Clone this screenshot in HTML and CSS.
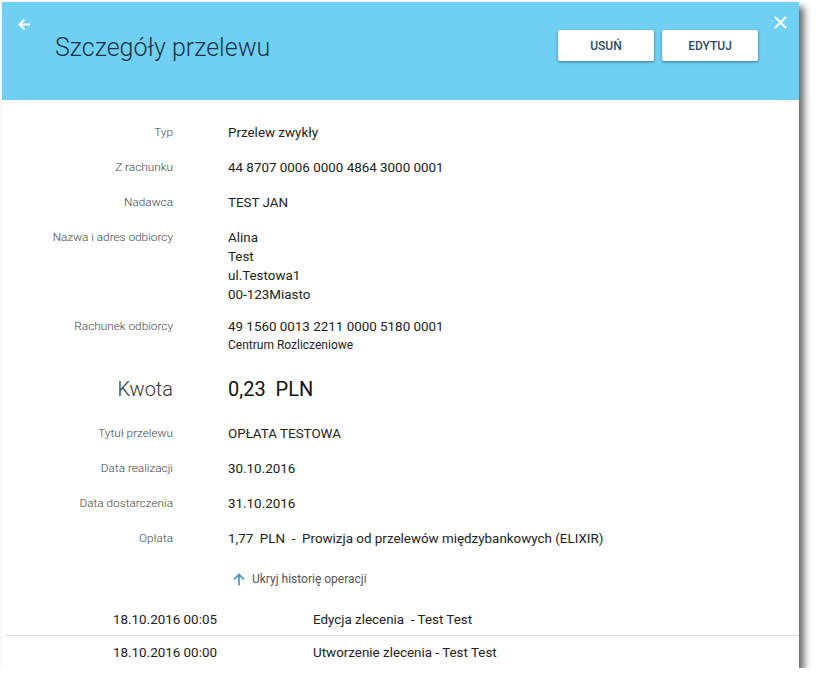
FILE: index.html
```html
<!DOCTYPE html>
<html lang="pl">
<head>
<meta charset="utf-8">
<title>Szczegóły przelewu</title>
<link rel="stylesheet" href="styles.css">
</head>
<body>
<div class="panel">
  <header class="header">
    <span class="back" aria-label="Wstecz">
      <svg width="13" height="13" viewBox="0 0 13 13"><path d="M12 6.5H2M6.5 1.5L1.5 6.5L6.5 11.5" fill="none" stroke="#fff" stroke-width="2"/></svg>
    </span>
    <h1 class="title">Szczegóły przelewu</h1>
    <div class="actions">
      <button class="btn">USUŃ</button>
      <button class="btn">EDYTUJ</button>
    </div>
    <span class="close" aria-label="Zamknij">
      <svg width="13" height="13" viewBox="0 0 13 13"><path d="M1 1L12 12M12 1L1 12" fill="none" stroke="#fff" stroke-width="2"/></svg>
    </span>
  </header>
  <section class="details">
    <div class="row"><div class="label">Typ</div><div class="value">Przelew zwykły</div></div>
    <div class="row"><div class="label">Z rachunku</div><div class="value">44 8707 0006 0000 4864 3000 0001</div></div>
    <div class="row"><div class="label">Nadawca</div><div class="value">TEST JAN</div></div>
    <div class="row row-multi"><div class="label">Nazwa i adres odbiorcy</div><div class="value">Alina<br>Test<br>ul.Testowa1<br>00-123Miasto</div></div>
    <div class="row row-account"><div class="label">Rachunek odbiorcy</div><div class="value">49 1560 0013 2211 0000 5180 0001<div class="sub">Centrum Rozliczeniowe</div></div></div>
    <div class="row row-amount"><div class="label">Kwota</div><div class="value">0,23&nbsp; PLN</div></div>
    <div class="row"><div class="label">Tytuł przelewu</div><div class="value">OPŁATA TESTOWA</div></div>
    <div class="row"><div class="label">Data realizacji</div><div class="value">30.10.2016</div></div>
    <div class="row"><div class="label">Data dostarczenia</div><div class="value">31.10.2016</div></div>
    <div class="row"><div class="label">Opłata</div><div class="value">1,77&nbsp; PLN&nbsp; -&nbsp; Prowizja od przelewów międzybankowych (ELIXIR)</div></div>
    <div class="toggle">
      <svg width="12" height="13" viewBox="0 0 12 13"><path d="M6 12.5V1.5M1 6.5L6 1.5L11 6.5" fill="none" stroke="#3d8fc6" stroke-width="1.6"/></svg>
      <span>Ukryj historię operacji</span>
    </div>
  </section>
  <section class="history">
    <div class="hrow"><div class="hdate">18.10.2016 00:05</div><div class="hdesc">Edycja zlecenia&nbsp; - Test Test</div></div>
    <div class="hrow"><div class="hdate">18.10.2016 00:00</div><div class="hdesc">Utworzenie zlecenia - Test Test</div></div>
  </section>
</div>
</body>
</html>
```
FILE: styles.css
```css
* { box-sizing: border-box; }
html, body { margin: 0; padding: 0; background: #fff; }
body { font-family: Roboto, "Liberation Sans", Arial, sans-serif; }

.panel {
  margin: 2px 0 0 2px;
  width: 797px;
  height: 666px;
  background: #fff;
  box-shadow: 5px 5px 7px rgba(0, 0, 0, 0.6);
  display: flex;
  flex-direction: column;
}

.header {
  position: relative;
  height: 98px;
  background: #70d0f4;
  display: flex;
  align-items: flex-start;
  padding-left: 53px;
  flex-shrink: 0;
}
.back { position: absolute; left: 16px; top: 16px; display: flex; }
.close { position: absolute; right: 12px; top: 14px; display: flex; }
.title {
  margin: 30px 0 0 0;
  font-weight: 300;
  font-size: 25px;
  line-height: 32px;
  color: #1a3347;
  flex: 1;
}
.actions {
  display: flex;
  gap: 8px;
  margin: 28px 41px 0 0;
}
.btn {
  width: 96px;
  height: 31px;
  border: none;
  border-radius: 2px;
  background: #fff;
  box-shadow: 0 1px 3px rgba(0, 0, 0, 0.45);
  font-family: inherit;
  font-size: 12px;
  font-weight: 500;
  color: #2b4a68;
  padding: 0;
}

.details {
  padding-top: 23px;
  flex: 1;
}
.row {
  display: grid;
  grid-template-columns: 171px 1fr;
  column-gap: 55px;
  line-height: 19px;
  margin-bottom: 16px;
}
.label {
  text-align: right;
  font-size: 11.8px;
  font-weight: 300;
  color: #444;
}
.value {
  font-size: 13.4px;
  color: #222;
}
.sub { font-size: 12px; }
.row-multi { margin-bottom: 13px; }
.row-account { margin-bottom: 20px; }
.row-amount { line-height: 28px; margin-bottom: 21px; }
.row-amount .label { font-size: 20px; color: #333; }
.row-amount .value { font-size: 20px; font-weight: 400; color: #111; }

.toggle {
  display: flex;
  align-items: center;
  gap: 7px;
  padding-left: 231px;
  margin-top: 22px;
  font-size: 12px;
  color: #555;
  line-height: 19px;
}

.history { flex-shrink: 0; }
.hrow {
  display: flex;
  height: 33px;
  align-items: center;
  padding-left: 111px;
  padding-top: 1px;
  font-size: 13.4px;
  color: #222;
}
.hrow + .hrow { border-top: 1px solid #ddd; margin-left: 3px; padding-left: 108px; }
.hdate { width: 200px; }
```
